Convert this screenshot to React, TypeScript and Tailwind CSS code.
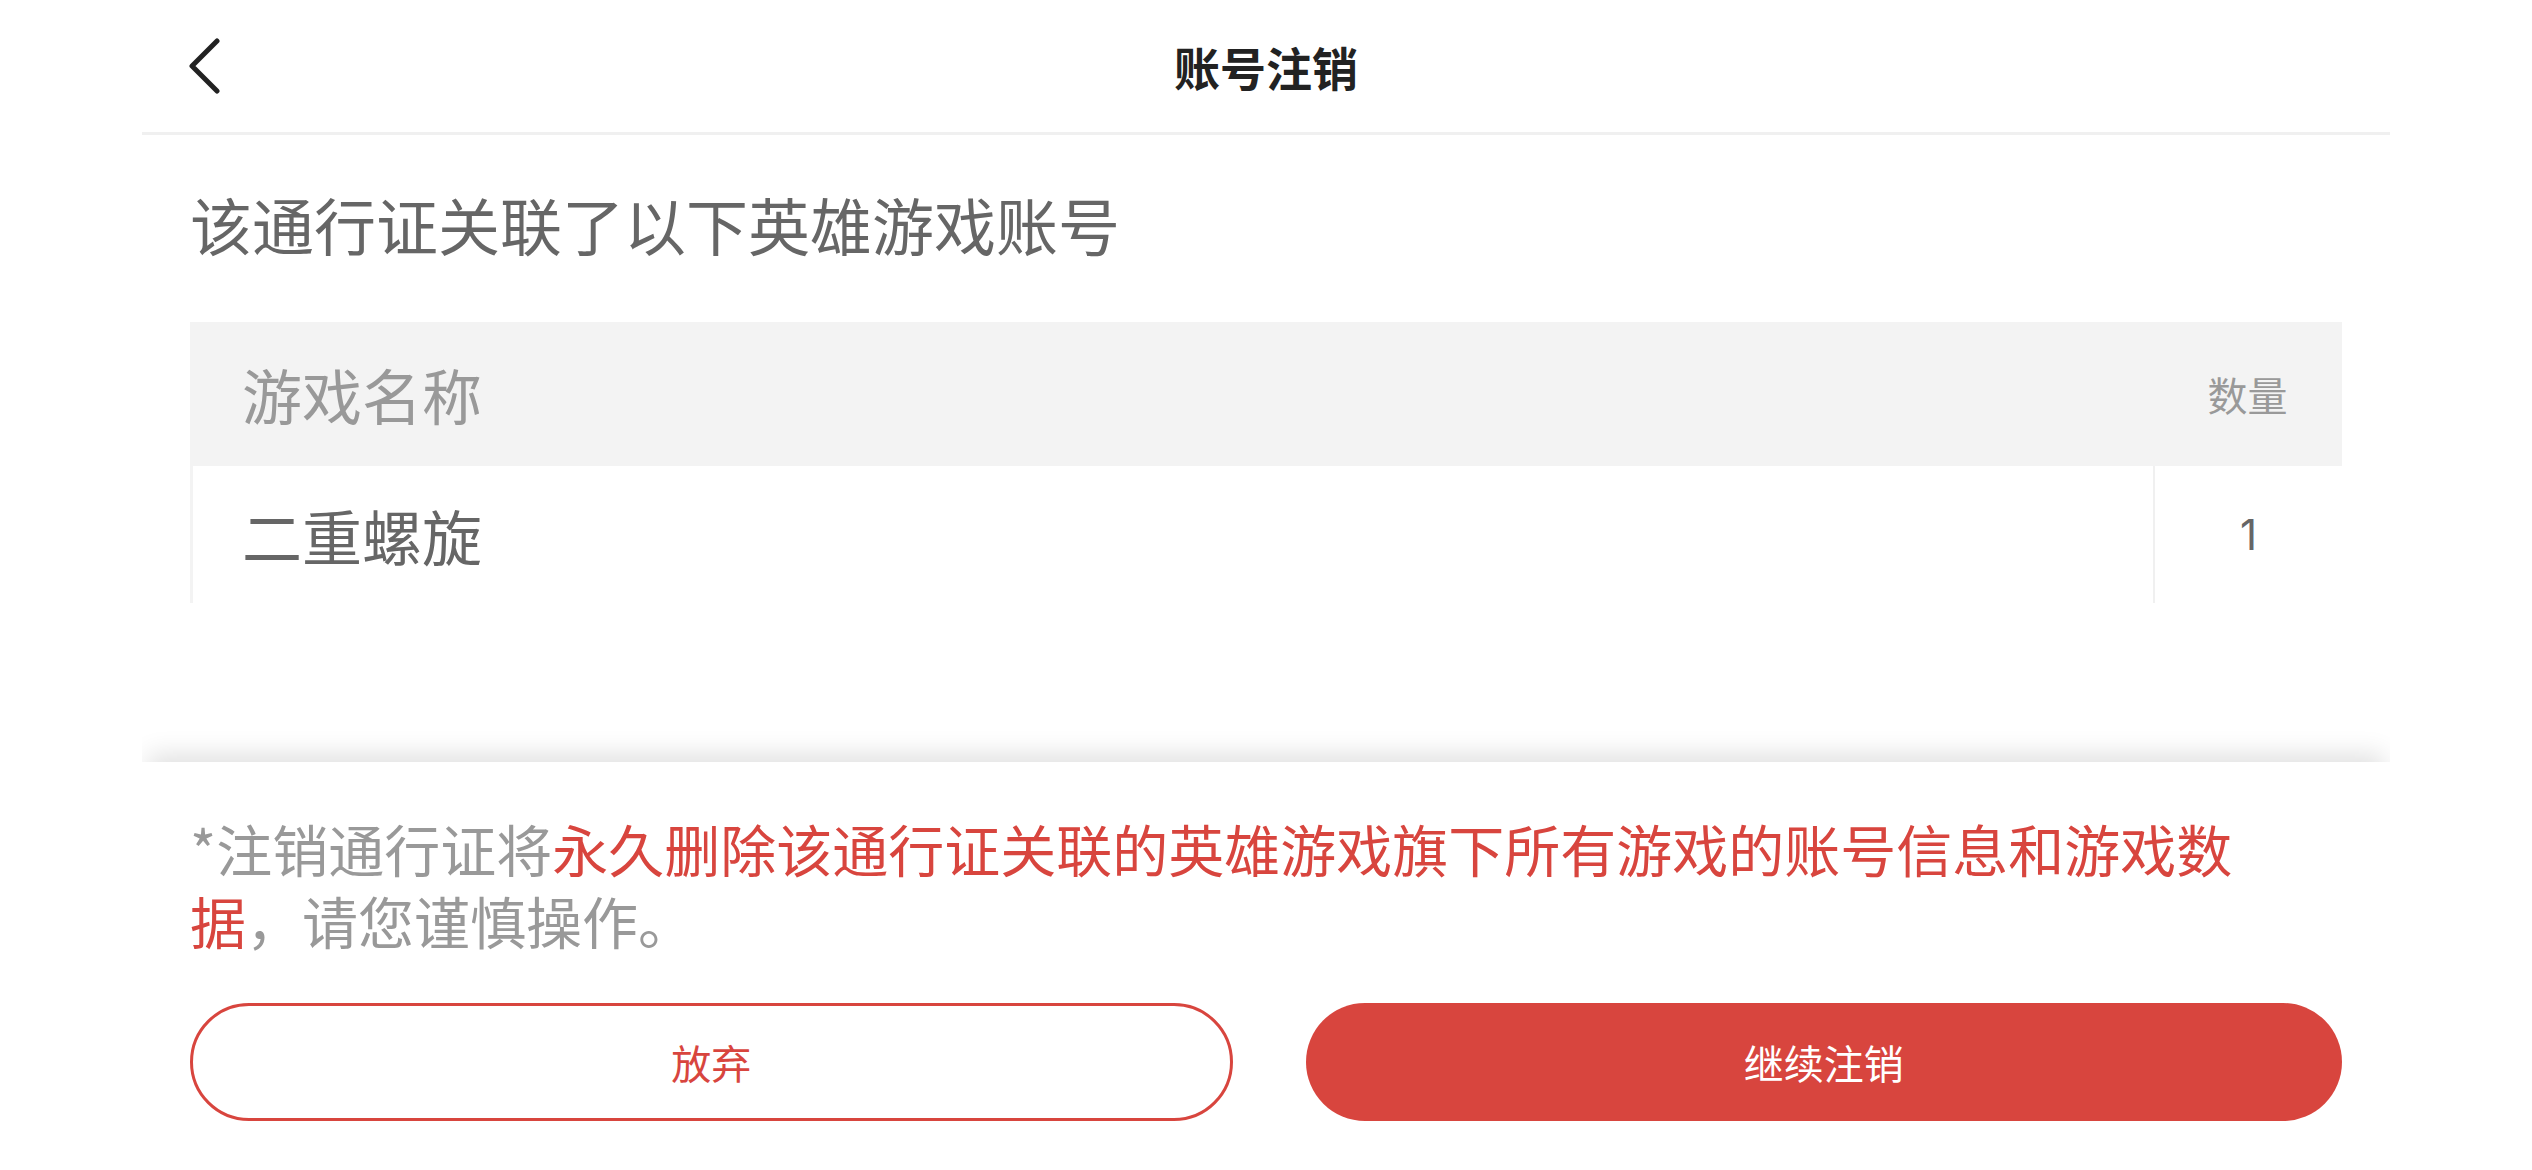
import React from "react";

const RED = "text-[#d8453e]";

function BackIcon() {
  return (
    <svg width="34" height="56" viewBox="0 0 34 56" fill="none">
      <polyline
        points="29,3 4,28 29,53"
        stroke="#222"
        strokeWidth="5"
        strokeLinecap="round"
        strokeLinejoin="round"
      />
    </svg>
  );
}

export default function App() {
  const rows = [{ name: "二重螺旋", count: 1 }];

  return (
    <div
      className="h-[1170px] w-full bg-white flex flex-col px-[142px] overflow-hidden"
      style={{ fontFamily: '"Noto Sans CJK SC", "Noto Sans", sans-serif' }}
    >
      {/* header */}
      <div className="relative h-[135px] border-b-[3px] border-[#f0f0f0] flex items-center justify-center shrink-0">
        <button className="absolute left-[46px] top-[38px]">
          <BackIcon />
        </button>
        <h1 className="text-[46px] leading-none font-bold text-[#222]">账号注销</h1>
      </div>

      {/* body */}
      <div className="px-[48px] flex-1">
        <p className="mt-[58px] text-[62px] leading-[62px] text-[#666]">该通行证关联了以下英雄游戏账号</p>

        <div className="mt-[67px]">
          <div className="flex h-[144px] bg-[#f3f3f3] items-center">
            <div className="flex-1 pl-[52px] text-[60px] leading-none text-[#999]">游戏名称</div>
            <div className="w-[189px] text-center text-[40px] leading-none text-[#999]">数量</div>
          </div>
          {rows.map((r, i) => (
            <div key={i} className="flex h-[137px] border-l-[3px] border-[#f3f3f3]">
              <div className="flex-1 flex items-center pl-[49px] text-[60px] leading-none text-[#666]">{r.name}</div>
              <div className="w-[189px] flex items-center justify-center border-l-[2px] border-[#f0f0f0] text-[42px] leading-none text-[#666] font-['Inter',sans-serif]">
                {r.count}
              </div>
            </div>
          ))}
        </div>
      </div>

      {/* bottom panel */}
      <div className="relative h-[408px] shrink-0 bg-white shadow-[0_-14px_24px_-6px_rgba(0,0,0,0.12)] [clip-path:inset(-40px_0_0_0)] px-[48px] pt-[50px]">
        <p className="w-[2090px] text-[56px] leading-[72px] text-[#999]">
          *注销通行证将<span className={RED}>永久删除该通行证关联的英雄游戏旗下所有游戏的账号信息和游戏数据</span>，请您谨慎操作。
        </p>
        <div className="mt-[47px] flex gap-[73px]">
          <button className="flex-1 h-[118px] rounded-full border-[3px] border-[#d8453e] bg-white text-[40px] text-[#d8453e] flex items-center justify-center">
            放弃
          </button>
          <button className="flex-1 h-[118px] rounded-full bg-[#d8453e] text-[40px] text-white flex items-center justify-center">
            继续注销
          </button>
        </div>
      </div>
    </div>
  );
}
